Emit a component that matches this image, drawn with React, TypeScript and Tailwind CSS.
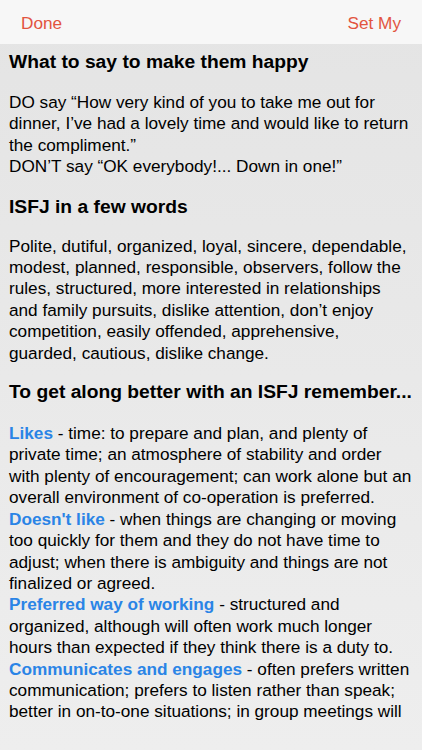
import React from "react";

const B = ({ children }: { children: React.ReactNode }) => (
  <span className="font-bold text-[#2a84e6]">{children}</span>
);

export default function App() {
  return (
    <div
      className="w-[422px] h-[750px] overflow-hidden flex flex-col bg-gradient-to-b from-[#e4e4e4] to-[#eeeeee] text-black"
      style={{ fontFamily: '"Liberation Sans", Arial, sans-serif' }}
    >
      <div className="h-[44px] shrink-0 bg-[#f7f7f7] flex items-center justify-between px-[21px] pt-[3px] text-[17.2px] text-[#e2543f]">
        <span>Done</span>
        <span>Set My</span>
      </div>
      <div className="px-[9px] text-[17.2px] leading-[21.4px]">
        <h2 className="font-bold text-[19.25px] leading-[24px] mt-[6px]">What to say to make them happy</h2>
        <p className="mt-[18px]">
          DO say “How very kind of you to take me out for dinner, I’ve had a lovely time and would like to return the compliment.”
          <br />
          DON’T say “OK everybody!... Down in one!”
        </p>
        <h2 className="font-bold text-[19.25px] leading-[24px] mt-[17px]">ISFJ in a few words</h2>
        <p className="mt-[17px]">
          Polite, dutiful, organized, loyal, sincere, dependable, modest, planned, responsible, observers, follow the rules, structured, more interested in relationships and family pursuits, dislike attention, don’t enjoy competition, easily offended, apprehensive,
          <br />
          guarded, cautious, dislike change.
        </p>
        <h2 className="font-bold text-[19.25px] leading-[24px] mt-[16px]">To get along better with an ISFJ remember...</h2>
        <p className="mt-[19px]">
          <B>Likes</B> - time: to prepare and plan, and plenty of private time; an atmosphere of stability and order with plenty of encouragement; can work alone but an overall environment of co-operation is preferred.
          <br />
          <B>Doesn't like</B> - when things are changing or moving too quickly for them and they do not have time to adjust; when there is ambiguity and things are not finalized or agreed.
          <br />
          <B>Preferred way of working</B> - structured and organized, although will often work much longer hours than expected if they think there is a duty to.
          <br />
          <B>Communicates and engages</B> - often prefers written communication; prefers to listen rather than speak; better in on-to-one situations; in group meetings will
        </p>
      </div>
    </div>
  );
}
